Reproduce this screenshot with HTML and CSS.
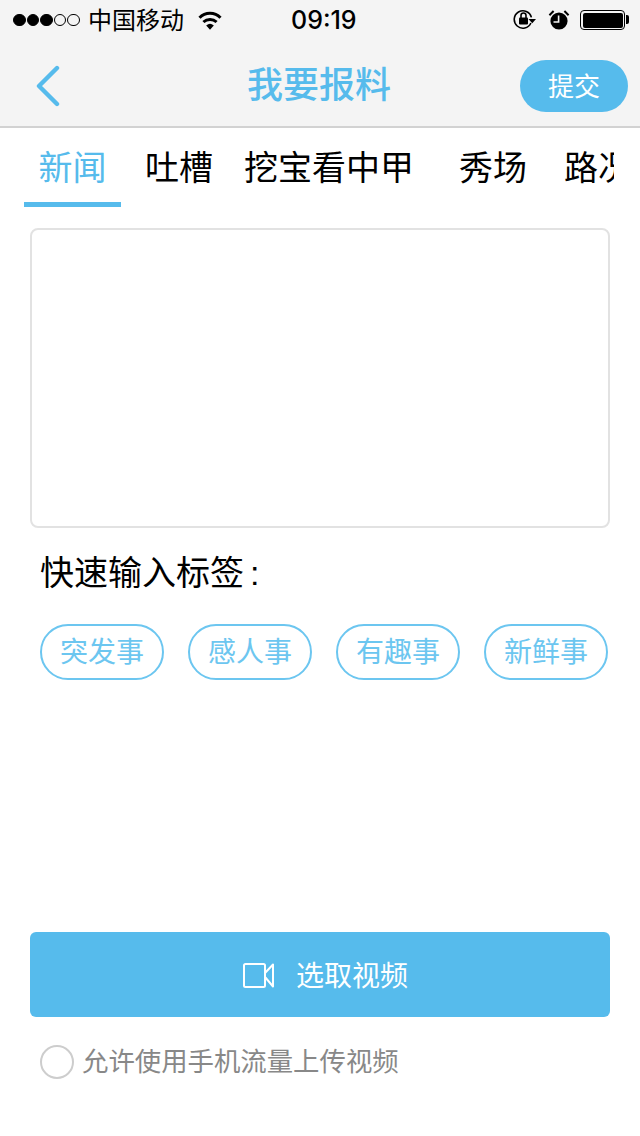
FILE: index.html
```html
<!DOCTYPE html>
<html lang="zh-CN">
<head>
    <meta charset="UTF-8">
    <meta name="viewport" content="width=device-width, initial-scale=1.0">
    <title>我要报料</title>
    <link rel="stylesheet" href="styles.css">
</head>
<body>
    <header class="top">
        <div class="status-bar">
            <div class="status-left">
                <div class="signal">
                    <span class="dot on"></span><span class="dot on"></span><span class="dot on"></span><span class="dot"></span><span class="dot"></span>
                </div>
                <span class="carrier">中国移动</span>
                <svg class="wifi" width="24" height="19" viewBox="0 0 24 19">
                    <path d="M12 18.800 8.200 14.400a5.800 5.800 0 0 1 7.600 0z" fill="#000"/>
                    <path d="M5.400 11a9.800 9.800 0 0 1 13.200 0M1.500 6.800a14.500 14.500 0 0 1 21 0" fill="none" stroke="#000" stroke-width="3"/>
                </svg>
            </div>
            <span class="time">09:19</span>
            <div class="status-right">
                <svg class="lock" width="25" height="22" viewBox="0 0 25 22">
                    <path d="M18.900 14A8.700 8.700 0 1 1 19.400 8.400" fill="none" stroke="#000" stroke-width="1.600"/>
                    <path d="M16.500 10H24l-3.750 4.200z" fill="#000"/>
                    <rect x="7" y="8.600" width="9" height="7" rx="1" fill="#000"/>
                    <path d="M9 9V6.500a2.500 2.500 0 0 1 5 0V9" fill="none" stroke="#000" stroke-width="1.600"/>
                </svg>
                <svg class="alarm" width="22" height="22" viewBox="0 0 22 22">
                    <circle cx="11" cy="12" r="8.600" fill="#000"/>
                    <path d="M1.400 6.200 5.600 2M16.400 2l4.200 4.200" stroke="#000" stroke-width="2" fill="none"/>
                    <path d="M10.600 6.500V13H5.500" stroke="#f4f4f4" stroke-width="1.600" fill="none"/>
                </svg>
                <div class="battery"><div class="battery-level"></div></div>
            </div>
        </div>
        <nav class="nav">
            <svg class="back" width="26" height="42" viewBox="0 0 26 42">
                <path d="M22 3 4 21l18 18" fill="none" stroke="#56bbec" stroke-width="4.400" stroke-linecap="round" stroke-linejoin="round"/>
            </svg>
            <h1 class="title">我要报料</h1>
            <button class="submit">提交</button>
        </nav>
    </header>

    <div class="tabs">
        <div class="tab active">新闻</div>
        <div class="tab tab-2">吐槽</div>
        <div class="tab tab-3">挖宝看中甲</div>
        <div class="tab tab-4">秀场</div>
        <div class="tab tab-5">路况</div>
    </div>

    <main class="content">
        <textarea class="report-box"></textarea>
        <div class="quick-label">快速输入标签<span class="colon">:</span></div>
        <div class="tag-list">
            <span class="tag">突发事</span>
            <span class="tag">感人事</span>
            <span class="tag">有趣事</span>
            <span class="tag">新鲜事</span>
        </div>
        <button class="video-btn">
            <svg class="video-icon" width="34" height="28" viewBox="0 0 34 28">
                <rect x="2" y="3" width="21" height="23" rx="1.500" fill="none" stroke="#fff" stroke-width="2"/>
                <path d="M31 3.500v22L23 16v-4z" fill="none" stroke="#fff" stroke-width="2" stroke-linejoin="round"/>
            </svg>
            <span>选取视频</span>
        </button>
        <label class="allow">
            <span class="radio"></span>
            <span class="allow-text">允许使用手机流量上传视频</span>
        </label>
    </main>
</body>
</html>
```

FILE: styles.css
```css
:root {
    --blue: #56bbec;
    --tag-blue: #6cc6f0;
}

* {
    box-sizing: border-box;
    margin: 0;
    padding: 0;
}

body {
    background: #fff;
    color: #000;
    font-family: 'Liberation Sans', 'Noto Sans CJK SC', sans-serif;
    height: 1136px;
    overflow: hidden;
}

.top {
    background: #f4f4f4;
    border-bottom: 2px solid #d2d2d2;
    height: 128px;
}

.status-bar {
    height: 40px;
    display: flex;
    align-items: center;
    padding: 0 12px;
}

.status-left,
.status-right {
    display: flex;
    align-items: center;
}

.status-left {
    width: 279px;
}

.signal {
    display: flex;
    gap: 1px;
    margin-left: 1px;
}

.dot {
    width: 12.600px;
    height: 12.600px;
    border-radius: 50%;
    border: 1px solid #000;
}

.dot.on {
    background: #000;
}

.carrier {
    font-size: 24px;
    margin: 0 0 3px 8px;
}

.wifi {
    margin-left: 14px;
}

.time {
    font-family: 'Inter', 'Liberation Sans', sans-serif;
    font-size: 25px;
    font-weight: 500;
}

.status-right {
    margin-left: auto;
    padding-right: 3px;
}

.alarm {
    margin-left: 11px;
}

.battery {
    width: 45px;
    height: 20px;
    margin-left: 10px;
    border: 1.500px solid #000;
    border-radius: 4px;
    padding: 1.500px;
    position: relative;
}

.battery::after {
    content: '';
    position: absolute;
    right: -5px;
    top: 4px;
    width: 3px;
    height: 9px;
    background: #000;
    border-radius: 0 2px 2px 0;
}

.battery-level {
    height: 100%;
    background: #000;
    border-radius: 2px;
}

.nav {
    height: 86px;
    display: grid;
    grid-template-columns: 1fr auto 1fr;
    align-items: center;
    padding: 6px 12px 0;
}

.back {
    margin-left: 23px;
}

.title {
    font-size: 36px;
    font-weight: 500;
    color: var(--blue);
    margin: 0 2px 8px 0;
}

.submit {
    justify-self: end;
    width: 108px;
    height: 52px;
    padding-bottom: 3px;
    border: none;
    border-radius: 26px;
    background: var(--blue);
    color: #fff;
    font-family: inherit;
    font-size: 26px;
}

.tabs {
    display: flex;
    height: 79px;
    margin-right: 26px;
    padding-left: 24px;
    overflow: hidden;
}

.tab {
    flex: none;
    padding: 1px 14.500px 0;
    font-size: 34px;
    line-height: 79px;
    height: 79px;
}

.tab.active {
    color: var(--blue);
    border-bottom: 5px solid var(--blue);
}

.tab-2 {
    margin-left: 9.500px;
}

.tab-3 {
    margin-left: 2px;
}

.tab-4 {
    margin-left: 16px;
}

.tab-5 {
    margin-left: 8px;
}

.content {
    padding: 21px 30px 0;
}

.report-box {
    display: block;
    width: 580px;
    height: 300px;
    border: 2px solid #e2e2e2;
    border-radius: 8px;
    resize: none;
    outline: none;
}

.quick-label {
    font-size: 34px;
    line-height: 46px;
    margin: 22px 0 0 10px;
}

.colon {
    margin-left: 6px;
}

.tag-list {
    display: flex;
    gap: 24px;
    margin: 28px 0 0 10px;
}

.tag {
    width: 124px;
    height: 56px;
    border: 2px solid var(--tag-blue);
    border-radius: 28px;
    color: var(--tag-blue);
    font-size: 28px;
    line-height: 54px;
    text-align: center;
}

.video-btn {
    width: 580px;
    height: 85px;
    margin-top: 252px;
    border: none;
    border-radius: 6px;
    background: var(--blue);
    color: #fff;
    font-family: inherit;
    font-size: 28px;
    display: flex;
    align-items: center;
    justify-content: center;
    gap: 20px;
    padding: 0 0 2px 10px;
}

.video-icon {
    margin-top: 3px;
}

.allow {
    display: flex;
    align-items: center;
    gap: 8px;
    margin: 28px 0 0 10px;
}

.radio {
    width: 34px;
    height: 34px;
    border: 2.500px solid #cdcdcd;
    border-radius: 50%;
}

.allow-text {
    color: #888;
    font-size: 26.400px;
    line-height: 34px;
}
```
